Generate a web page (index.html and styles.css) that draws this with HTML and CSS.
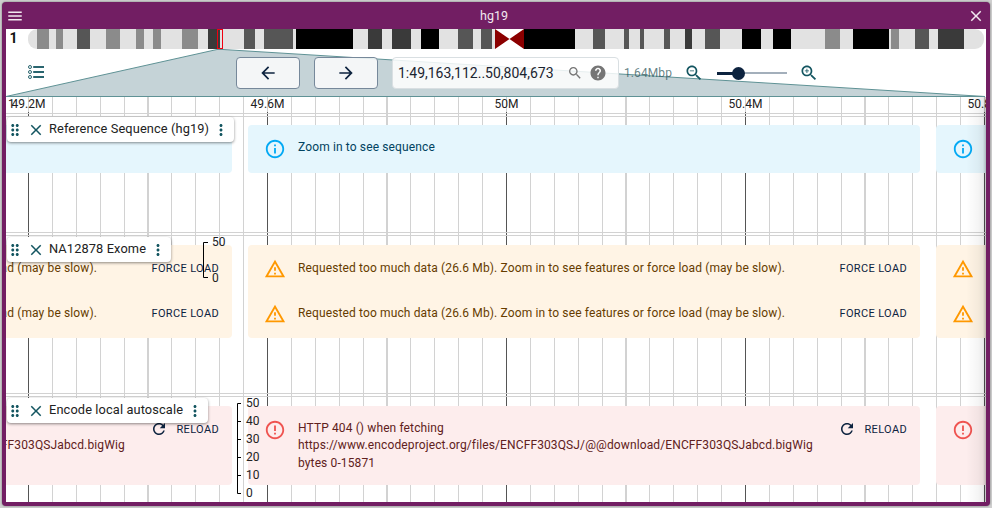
FILE: index.html
```html
<!DOCTYPE html>
<html lang="en">
<head>
<meta charset="utf-8">
<title>hg19</title>
<link rel="stylesheet" href="styles.css">
</head>
<body>
<svg class="defs" width="0" height="0" aria-hidden="true">
  <symbol id="i-menu" viewBox="0 0 24 24"><path d="M3 18h18v-2H3v2zm0-5h18v-2H3v2zm0-7v2h18V6H3z"/></symbol>
  <symbol id="i-close" viewBox="0 0 24 24"><path d="M19 6.41 17.59 5 12 10.59 6.41 5 5 6.41 10.59 12 5 17.59 6.41 19 12 13.41 17.59 19 19 17.59 13.41 12z"/></symbol>
  <symbol id="i-info" viewBox="0 0 24 24"><path d="M11 7h2v2h-2zm0 4h2v6h-2zm1-9C6.48 2 2 6.48 2 12s4.48 10 10 10 10-4.48 10-10S17.52 2 12 2zm0 18c-4.41 0-8-3.59-8-8s3.59-8 8-8 8 3.59 8 8-3.59 8-8 8z"/></symbol>
  <symbol id="i-warn" viewBox="0 0 24 24"><path d="M12 5.99 19.53 19H4.47L12 5.99M12 2 1 21h22L12 2zm1 14h-2v2h2v-2zm0-6h-2v4h2v-4z"/></symbol>
  <symbol id="i-error" viewBox="0 0 24 24"><path d="M11 15h2v2h-2zm0-8h2v6h-2zm.99-5C6.47 2 2 6.48 2 12s4.47 10 9.99 10C17.52 22 22 17.52 22 12S17.52 2 11.99 2zM12 20c-4.42 0-8-3.58-8-8s3.58-8 8-8 8 3.58 8 8-3.58 8-8 8z"/></symbol>
  <symbol id="i-refresh" viewBox="0 0 24 24"><path d="M17.65 6.35C16.2 4.9 14.21 4 12 4c-4.42 0-7.99 3.58-7.99 8s3.57 8 7.99 8c3.73 0 6.84-2.55 7.73-6h-2.08c-.82 2.33-3.04 4-5.65 4-3.31 0-6-2.69-6-6s2.69-6 6-6c1.66 0 3.14.69 4.22 1.78L13 11h7V4l-2.35 2.35z"/></symbol>
  <symbol id="i-back" viewBox="0 0 24 24"><path d="M20 11H7.83l5.59-5.59L12 4l-8 8 8 8 1.41-1.41L7.83 13H20v-2z"/></symbol>
  <symbol id="i-forward" viewBox="0 0 24 24"><path d="m12 4-1.41 1.41L16.17 11H4v2h12.17l-5.58 5.59L12 20l8-8z"/></symbol>
  <symbol id="i-search" viewBox="0 0 24 24"><path d="M15.5 14h-.79l-.28-.27C15.41 12.59 16 11.11 16 9.5 16 5.91 13.09 3 9.5 3S3 5.91 3 9.5 5.91 16 9.5 16c1.61 0 3.09-.59 4.23-1.57l.27.28v.79l5 4.99L20.49 19l-4.99-5zm-6 0C7.01 14 5 11.99 5 9.5S7.01 5 9.5 5 14 7.01 14 9.5 11.99 14 9.5 14z"/></symbol>
  <symbol id="i-help" viewBox="0 0 24 24"><path d="M12 2C6.48 2 2 6.48 2 12s4.48 10 10 10 10-4.48 10-10S17.52 2 12 2zm1 17h-2v-2h2v2zm2.07-7.75-.9.92C13.45 12.9 13 13.5 13 15h-2v-.5c0-1.1.45-2.1 1.17-2.83l1.24-1.26c.37-.36.59-.86.59-1.41 0-1.1-.9-2-2-2s-2 .9-2 2H8c0-2.21 1.79-4 4-4s4 1.79 4 4c0 .88-.36 1.68-.93 2.25z"/></symbol>
  <symbol id="i-zoomout" viewBox="0 0 24 24"><path d="M15.5 14h-.79l-.28-.27C15.41 12.59 16 11.11 16 9.5 16 5.91 13.09 3 9.5 3S3 5.91 3 9.5 5.91 16 9.5 16c1.61 0 3.09-.59 4.23-1.57l.27.28v.79l5 4.99L20.49 19l-4.99-5zm-6 0C7.01 14 5 11.99 5 9.5S7.01 5 9.5 5 14 7.01 14 9.5 11.99 14 9.5 14zM7 9h5v1H7z"/></symbol>
  <symbol id="i-zoomin" viewBox="0 0 24 24"><path d="M15.5 14h-.79l-.28-.27C15.41 12.59 16 11.11 16 9.5 16 5.91 13.09 3 9.5 3S3 5.91 3 9.5 5.91 16 9.5 16c1.61 0 3.09-.59 4.23-1.57l.27.28v.79l5 4.99L20.49 19l-4.99-5zm-6 0C7.01 14 5 11.99 5 9.5S7.01 5 9.5 5 14 7.01 14 9.5 11.99 14 9.5 14zm2.5-4h-2v2H9v-2H7V9h2V7h1v2h2v1z"/></symbol>
  <symbol id="i-drag" viewBox="0 0 24 24"><path d="M11 18c0 1.1-.9 2-2 2s-2-.9-2-2 .9-2 2-2 2 .9 2 2zm-2-8c-1.1 0-2 .9-2 2s.9 2 2 2 2-.9 2-2-.9-2-2-2zm0-6c-1.1 0-2 .9-2 2s.9 2 2 2 2-.9 2-2-.9-2-2-2zm6 4c1.1 0 2-.9 2-2s-.9-2-2-2-2 .9-2 2 .9 2 2 2zm0 2c-1.1 0-2 .9-2 2s.9 2 2 2 2-.9 2-2-.9-2-2-2zm0 6c-1.1 0-2 .9-2 2s.9 2 2 2 2-.9 2-2-.9-2-2-2z"/></symbol>
  <symbol id="i-more" viewBox="0 0 24 24"><path d="M12 8c1.1 0 2-.9 2-2s-.9-2-2-2-2 .9-2 2 .9 2 2 2zm0 2c-1.1 0-2 .9-2 2s.9 2 2 2 2-.9 2-2-.9-2-2-2zm0 6c-1.1 0-2 .9-2 2s.9 2 2 2 2-.9 2-2-.9-2-2-2z"/></symbol>
</svg>

<div class="window">
  <header class="titlebar">
    <svg class="ic ic-bar"><use href="#i-menu"/></svg>
    <span class="title">hg19</span>
    <svg class="ic ic-bar"><use href="#i-close"/></svg>
  </header>

  <div class="body">
    <div class="ideo-row">
      <span class="chrom">1</span>
      <svg class="ideogram" viewBox="28 0 956 20" width="956" height="20">
        <defs><clipPath id="ideo-clip"><rect x="28" y="0" width="956" height="20" rx="9" ry="9"/></clipPath></defs>
        <g clip-path="url(#ideo-clip)">
          <rect x="28" y="0" width="956" height="20" fill="#e2e2e2"/>
          <g fill="#8b8b8b">
            <rect x="37" width="12" height="20"/><rect x="56" width="7" height="20"/><rect x="106" width="14" height="20"/><rect x="136" width="8" height="20"/><rect x="153" width="8" height="20"/><rect x="182" width="16" height="20"/><rect x="825" width="15" height="20"/><rect x="891" width="8" height="20"/>
          </g>
          <g fill="#565656">
            <rect x="77" width="13" height="20"/><rect x="244" width="11" height="20"/><rect x="264" width="29" height="20"/><rect x="458" width="15" height="20"/><rect x="481" width="11" height="20"/><rect x="593" width="12" height="20"/><rect x="624" width="5" height="20"/><rect x="640" width="4" height="20"/><rect x="664" width="6" height="20"/><rect x="705" width="15" height="20"/><rect x="915" width="14" height="20"/>
          </g>
          <g fill="#3a3a3a">
            <rect x="208" width="12" height="20"/><rect x="368" width="14" height="20"/><rect x="392" width="19" height="20"/><rect x="685" width="7" height="20"/><rect x="938" width="26" height="20"/>
          </g>
          <g fill="#000">
            <rect x="296" width="57" height="20"/><rect x="421" width="18" height="20"/><rect x="524" width="51" height="20"/><rect x="742" width="19" height="20"/><rect x="773" width="18" height="20"/><rect x="853" width="36" height="20"/>
          </g>
          <rect x="495" width="29" height="20" fill="#fff"/>
          <path d="M495 0 509.5 10 495 20zM524 0 509.5 10 524 20z" fill="#8b0000"/>
        </g>
        <rect x="217.5" y="0.5" width="5" height="19" fill="none" stroke="#f00010"/>
      </svg>
    </div>

    <div class="toolbar">
      <svg class="overview" viewBox="0 0 980 48" width="980" height="48">
        <polygon points="0,47.5 211,0.5 217,0.5 979,47.5" fill="#c5d3d7" stroke="#5f9295"/>
      </svg>
      <svg class="list-icon" viewBox="0 0 16 14" width="16" height="14">
        <g fill="none" stroke="#135560" stroke-width=".9">
          <circle cx="2" cy="2" r="1.5"/><circle cx="2" cy="7" r="1.5"/><circle cx="2" cy="12" r="1.5"/>
        </g>
        <g fill="#135560"><rect x="5.2" y="1.1" width="10.8" height="1.8"/><rect x="5.2" y="6.1" width="10.8" height="1.8"/><rect x="5.2" y="11.1" width="10.8" height="1.8"/></g>
      </svg>
      <button class="nav-btn"><svg class="ic ic-nav"><use href="#i-back"/></svg></button>
      <button class="nav-btn"><svg class="ic ic-nav"><use href="#i-forward"/></svg></button>
      <div class="search">
        <span class="locstring">1:49,163,112..50,804,673</span>
        <svg class="ic ic-search"><use href="#i-search"/></svg>
        <svg class="ic ic-help"><use href="#i-help"/></svg>
      </div>
      <span class="bp">1.64Mbp</span>
      <svg class="ic ic-zoom ic-zoomout"><use href="#i-zoomout"/></svg>
      <div class="slider"><span class="slider-fill"></span><span class="slider-thumb"></span></div>
      <svg class="ic ic-zoom ic-zoomin"><use href="#i-zoomin"/></svg>
    </div>

    <div class="view">
      <div class="major-ticks"></div>

      <div class="ruler">
        <span class="refname">1</span>
        <span class="tick tick-1">49.2M</span>
        <span class="tick tick-2">49.6M</span>
        <span class="tick tick-3">50M</span>
        <span class="tick tick-4">50.4M</span>
        <span class="tick tick-5">50.8M</span>
      </div>

      <section class="track track-ref">
        <div class="label"><svg class="ic ic-drag"><use href="#i-drag"/></svg><svg class="ic ic-x"><use href="#i-close"/></svg><span class="label-text">Reference Sequence (hg19)</span><svg class="ic ic-more"><use href="#i-more"/></svg></div>
        <div class="blocks">
          <div class="block info"><div class="alert"><svg class="ic ic-alert"><use href="#i-info"/></svg><div class="msg">Zoom in to see sequence</div></div></div>
          <div class="block info"><div class="alert"><svg class="ic ic-alert"><use href="#i-info"/></svg><div class="msg">Zoom in to see sequence</div></div></div>
          <div class="block info"><div class="alert"><svg class="ic ic-alert"><use href="#i-info"/></svg><div class="msg">Zoom in to see sequence</div></div></div>
        </div>
      </section>

      <section class="track track-exome">
        <div class="label"><svg class="ic ic-drag"><use href="#i-drag"/></svg><svg class="ic ic-x"><use href="#i-close"/></svg><span class="label-text">NA12878 Exome</span><svg class="ic ic-more"><use href="#i-more"/></svg></div>
        <svg class="axis axis-small" viewBox="0 0 30 44" width="30" height="44">
          <path d="M7 5.5H2.5V40.5H7" fill="none" stroke="#000"/>
          <text x="11" y="9">50</text><text x="11" y="44.5">0</text>
        </svg>
        <div class="blocks">
          <div class="block warn">
            <div class="alert"><svg class="ic ic-alert"><use href="#i-warn"/></svg><div class="msg">Requested too much data (26.6 Mb). Zoom in to see features or force load (may be slow).</div><span class="action">Force Load</span></div>
            <div class="alert"><svg class="ic ic-alert"><use href="#i-warn"/></svg><div class="msg">Requested too much data (26.6 Mb). Zoom in to see features or force load (may be slow).</div><span class="action">Force Load</span></div>
          </div>
          <div class="block warn">
            <div class="alert"><svg class="ic ic-alert"><use href="#i-warn"/></svg><div class="msg">Requested too much data (26.6 Mb). Zoom in to see features or force load (may be slow).</div><span class="action">Force Load</span></div>
            <div class="alert"><svg class="ic ic-alert"><use href="#i-warn"/></svg><div class="msg">Requested too much data (26.6 Mb). Zoom in to see features or force load (may be slow).</div><span class="action">Force Load</span></div>
          </div>
          <div class="block warn">
            <div class="alert"><svg class="ic ic-alert"><use href="#i-warn"/></svg><div class="msg">Requested too much data (26.6 Mb). Zoom in to see features or force load (may be slow).</div><span class="action">Force Load</span></div>
            <div class="alert"><svg class="ic ic-alert"><use href="#i-warn"/></svg><div class="msg">Requested too much data (26.6 Mb). Zoom in to see features or force load (may be slow).</div><span class="action">Force Load</span></div>
          </div>
        </div>
      </section>

      <section class="track track-encode">
        <div class="label"><svg class="ic ic-drag"><use href="#i-drag"/></svg><svg class="ic ic-x"><use href="#i-close"/></svg><span class="label-text">Encode local autoscale</span><svg class="ic ic-more"><use href="#i-more"/></svg></div>
        <svg class="axis axis-large" viewBox="0 0 30 100" width="30" height="100">
          <path d="M6 6.5H2.5V96.5H6M2.5 24.5H6M2.5 42.5H6M2.5 60.5H6M2.5 78.5H6" fill="none" stroke="#000"/>
          <text x="11" y="10">50</text><text x="11" y="28">40</text><text x="11" y="46">30</text><text x="11" y="64">20</text><text x="11" y="82">10</text><text x="11" y="100">0</text>
        </svg>
        <div class="blocks">
          <div class="block err"><div class="alert"><svg class="ic ic-alert"><use href="#i-error"/></svg><div class="msg">HTTP 404 () when fetching https://www.encodeproject.org/files/ENCFF303QSJ/@@download/ENCFF303QSJabcd.bigWig bytes 0-15871</div><span class="action"><svg class="ic ic-refresh"><use href="#i-refresh"/></svg>Reload</span></div></div>
          <div class="block err"><div class="alert"><svg class="ic ic-alert"><use href="#i-error"/></svg><div class="msg">HTTP 404 () when fetching https://www.encodeproject.org/files/ENCFF303QSJ/@@download/ENCFF303QSJabcd.bigWig bytes 0-15871</div><span class="action"><svg class="ic ic-refresh"><use href="#i-refresh"/></svg>Reload</span></div></div>
          <div class="block err"><div class="alert"><svg class="ic ic-alert"><use href="#i-error"/></svg><div class="msg">HTTP 404 () when fetching https://www.encodeproject.org/files/ENCFF303QSJ/@@download/ENCFF303QSJabcd.bigWig bytes 0-15871</div><span class="action"><svg class="ic ic-refresh"><use href="#i-refresh"/></svg>Reload</span></div></div>
        </div>
      </section>

      <div class="edge-shade"></div>
    </div>
  </div>
</div>
</body>
</html>
```

FILE: styles.css
```css
* { box-sizing: border-box; }
html, body { margin: 0; height: 100%; }
body {
  background: #cfcfcf;
  font-family: Roboto, "Liberation Sans", sans-serif;
  font-size: 12px;
  overflow: hidden;
  padding: 2px;
}
.defs { position: absolute; }
.ic { display: block; flex: none; fill: currentColor; }

.window {
  width: 988px;
  height: 504px;
  background: #721e63;
  border-radius: 4px;
  padding: 0 4px 4px;
  display: flex;
  flex-direction: column;
  box-shadow: 0 0 2px rgba(0, 0, 0, .5);
}
.titlebar {
  height: 27px;
  flex: none;
  display: flex;
  align-items: center;
  justify-content: space-between;
  color: #f1e8f0;
  padding: 0 1px 0 0;
}
.title { font-size: 12.5px; transform: translateX(-1.5px); }
.ic-bar { width: 18px; height: 18px; }

.body {
  flex: 1;
  background: #fff;
  display: flex;
  flex-direction: column;
  min-height: 0;
  overflow: hidden;
}

/* Ideogram */
.ideo-row { height: 20px; flex: none; display: flex; align-items: center; position: relative; }
.chrom { width: 22px; padding: 0 0 2px 3.5px; font-size: 14px; font-weight: 700; color: #111; }
.ideogram { display: block; }

/* Toolbar */
.toolbar {
  height: 48px;
  flex: none;
  position: relative;
  display: flex;
  align-items: center;
  padding: 0 0 0 22px;
}
.overview { position: absolute; left: 0; top: 0; }
.toolbar > *:not(.overview) { position: relative; }
.list-icon { margin: 0 192px 2px 0; }
.nav-btn {
  width: 64px;
  height: 32px;
  margin-right: 14px;
  padding: 0;
  display: flex;
  align-items: center;
  justify-content: center;
  color: #0d233f;
  background: rgba(255, 255, 255, .8);
  border: 1px solid #76889a;
  border-radius: 4px;
}
.ic-nav { width: 20px; height: 20px; }
.search {
  width: 227px;
  height: 32px;
  display: flex;
  align-items: center;
  padding: 0 11px 1px 5px;
  background: rgba(255, 255, 255, .85);
  border: 1px solid #d9dfe2;
  border-radius: 4px;
  color: #1b2430;
}
.locstring { font-size: 14px; flex: 1; white-space: nowrap; }
.ic-search { width: 16px; height: 16px; color: #757575; margin-right: 6px; }
.ic-help { width: 18px; height: 18px; color: #757575; }
.bp { margin-left: 5px; padding-bottom: 1px; font-size: 12px; letter-spacing: .1px; color: rgba(40, 80, 85, .72); width: 47px; white-space: nowrap; }
.ic-zoom { width: 20px; height: 20px; color: #135560; }
.ic-zoomout { margin-left: 13px; }
.ic-zoomin { margin-left: 12px; }
.slider {
  width: 70px;
  height: 2px;
  margin-left: 13px;
  background: #a3afbb;
  position: relative;
}
.slider-fill { position: absolute; left: 0; top: -.5px; width: 21px; height: 3px; background: #0d233f; }
.slider-thumb {
  position: absolute;
  left: 14.5px;
  top: -5.5px;
  width: 13px;
  height: 13px;
  border-radius: 50%;
  background: #0d233f;
}

/* View: ruler, tracks and the grid behind them */
.view {
  flex: 1;
  min-height: 0;
  position: relative;
  overflow: hidden;
  background-image: linear-gradient(90deg,
    #d2d2d2 0 1px, transparent 1px 23.9px,
    #d2d2d2 23.9px 24.9px, transparent 24.9px 47.8px,
    #d2d2d2 47.8px 48.8px, transparent 48.8px 71.7px,
    #d2d2d2 71.7px 72.7px, transparent 72.7px 95.6px,
    #d2d2d2 95.6px 96.6px, transparent 96.6px 119.5px,
    #d2d2d2 119.5px 120.5px, transparent 120.5px 143.4px,
    #d2d2d2 143.4px 144.4px, transparent 144.4px 167.3px,
    #d2d2d2 167.3px 168.3px, transparent 168.3px 191.2px,
    #d2d2d2 191.2px 192.2px, transparent 192.2px 215.1px,
    #d2d2d2 215.1px 216.1px, transparent 216.1px 239px);
  background-size: 239px 100%;
  background-position: 22px 0;
}
.major-ticks {
  position: absolute;
  inset: 15px 0 0 0;
  background-image: linear-gradient(90deg, #555 0 1px, transparent 1px);
  background-size: 239px 100%;
  background-position: 22px 0;
}
.ruler { height: 20px; position: relative; border-bottom: 1px solid #d2d2d2; }
.ruler::before {
  content: "";
  position: absolute;
  left: 0;
  right: 0;
  top: 16px;
  height: 1px;
  background: #d2d2d2;
}
.refname, .tick { position: absolute; top: 0; line-height: 14px; font-size: 12px; color: #222; white-space: nowrap; }
.refname { left: 2px; }
.tick { transform: translateX(-50%); background: transparent; }
.tick-1 { left: 22.5px; }
.tick-2 { left: 261.5px; }
.tick-3 { left: 500.5px; }
.tick-4 { left: 739.5px; }
.tick-5 { left: 978.5px; }

.track { position: relative; border-bottom: 1px solid #d2d2d2; }
.track::after {
  content: "";
  position: absolute;
  left: 0;
  right: 0;
  bottom: -4px;
  height: 1px;
  background: #d2d2d2;
}
.track-ref { height: 116px; padding-top: 8px; margin-bottom: 3px; }
.track-exome { height: 158px; padding-top: 9px; margin-bottom: 3px; }
.track-encode { padding-top: 9px; border-bottom: 0; }
.track-encode::after { display: none; }

.blocks { display: flex; gap: 16px; margin-left: -446px; width: max-content; }
.block { width: 672px; border-radius: 4px; position: relative; flex: none; }
.info { background: #e5f6fd; color: #014361; }
.warn { background: #fff4e5; color: #663c00; padding-bottom: 2.7px; }
.err { background: #fdeded; color: #5f2120; }
.alert { display: flex; padding: 6px 13px 6px 16px; }
.ic-alert { width: 22px; height: 22px; margin: 7px 12px 7px 0; }
.info .ic-alert { color: #03a9f4; }
.warn .alert { height: 45px; }
.warn .ic-alert { color: #ff9800; }
.err .ic-alert { color: #ef5350; }
.msg { flex: 1; font-size: 12px; letter-spacing: .01071em; line-height: 17.5px; padding: 8px 0; }
.warn .msg { padding-top: 9px; padding-bottom: 0; }
.err .msg { padding: 7.6px 0 6.9px; flex: none; width: 530px; letter-spacing: .01em; }
.action {
  display: flex;
  align-items: center;
  align-self: flex-start;
  gap: 8px;
  height: 24px;
  margin-top: 5px;
  margin-left: auto;
  font-size: 11px;
  letter-spacing: .35px;
  text-transform: uppercase;
  color: #0d233f;
  white-space: nowrap;
}
.ic-refresh { width: 18px; height: 18px; }

.label {
  position: absolute;
  left: 1px;
  top: 0;
  z-index: 3;
  height: 25px;
  display: flex;
  align-items: center;
  padding: 0 4px 0 0;
  background: #fff;
  border-radius: 4px;
  box-shadow: 0 1px 3px rgba(0, 0, 0, .45);
  color: #222;
}
.track-exome .label, .track-encode .label { top: 1px; }
.label-text { font-size: 12.8px; letter-spacing: .12px; white-space: nowrap; margin: 0 3px 2px 4px; }
.ic-drag { width: 18px; height: 18px; color: #135560; margin: 0 3px 0 -1px; }
.ic-x { width: 18px; height: 18px; color: #135560; }
.ic-more { width: 18px; height: 18px; color: #135560; }

.axis { position: absolute; z-index: 2; overflow: visible; }
.axis text { font-size: 12px; fill: #222; font-family: Roboto, "Liberation Sans", sans-serif; }
.axis-small { left: 195px; top: 1px; }
.axis-large { left: 229px; top: 0; }

.edge-shade {
  position: absolute;
  top: 0;
  bottom: 0;
  right: 0;
  width: 20px;
  z-index: 4;
  background: linear-gradient(90deg, rgba(0, 0, 0, 0), rgba(0, 0, 0, .04) 60%, rgba(0, 0, 0, .08) 85%, rgba(0, 0, 0, .25));
}
```
